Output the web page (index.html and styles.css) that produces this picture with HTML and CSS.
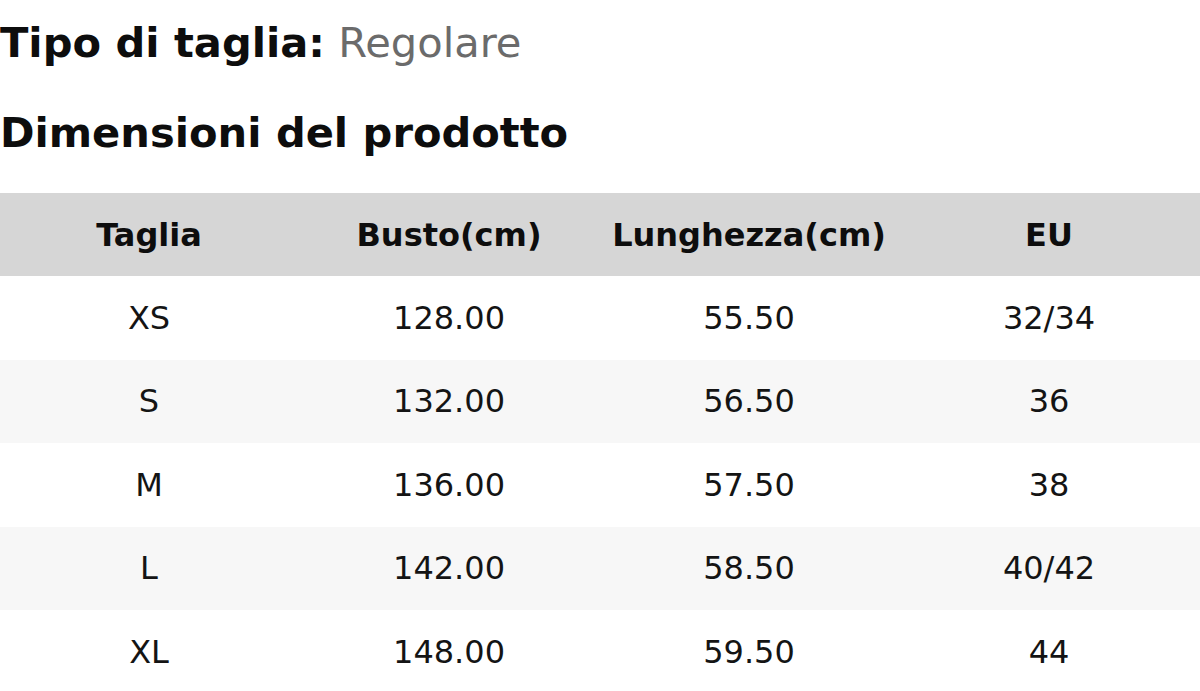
FILE: index.html
```
<!DOCTYPE html>
<html lang="it">
<head>
<meta charset="utf-8">
<title>Dimensioni del prodotto</title>
<link rel="stylesheet" href="styles.css">
</head>
<body>
<p class="fit"><span class="label">Tipo di taglia:</span> <span class="value">Regolare</span></p>
<h2 class="title">Dimensioni del prodotto</h2>
<table class="sizes">
<thead>
<tr><th>Taglia</th><th>Busto(cm)</th><th>Lunghezza(cm)</th><th>EU</th></tr>
</thead>
<tbody>
<tr><td>XS</td><td>128.00</td><td>55.50</td><td>32/34</td></tr>
<tr><td>S</td><td>132.00</td><td>56.50</td><td>36</td></tr>
<tr><td>M</td><td>136.00</td><td>57.50</td><td>38</td></tr>
<tr><td>L</td><td>142.00</td><td>58.50</td><td>40/42</td></tr>
<tr><td>XL</td><td>148.00</td><td>59.50</td><td>44</td></tr>
</tbody>
</table>
</body>
</html>
```
FILE: styles.css
```
html, body {
  margin: 0;
  padding: 0;
  background: #ffffff;
  color: #0d0d0d;
  font-family: "DejaVu Sans", "Liberation Sans", sans-serif;
}
.fit {
  margin: 19px 0 0 0;
  font-size: 41.6px;
  line-height: 48px;
}
.label {
  font-weight: bold;
  color: #0d0d0d;
}
.value {
  color: #6b6b6b;
}
.title {
  margin: 42px 0 0 0;
  font-size: 41.6px;
  line-height: 48px;
  font-weight: bold;
  color: #0d0d0d;
}
.sizes {
  margin-top: 36px;
  width: 1200px;
  border-collapse: collapse;
  table-layout: fixed;
  font-size: 32px;
}
.sizes th, .sizes td {
  width: 25%;
  padding: 0 2px 0 0;
  text-align: center;
  vertical-align: middle;
}
.sizes th {
  height: 83px;
  background: #d6d6d6;
  font-weight: bold;
  color: #0d0d0d;
}
.sizes td {
  height: 83.5px;
  color: #141414;
}
.sizes tbody tr:nth-child(even) td {
  background: #f7f7f7;
}
```
